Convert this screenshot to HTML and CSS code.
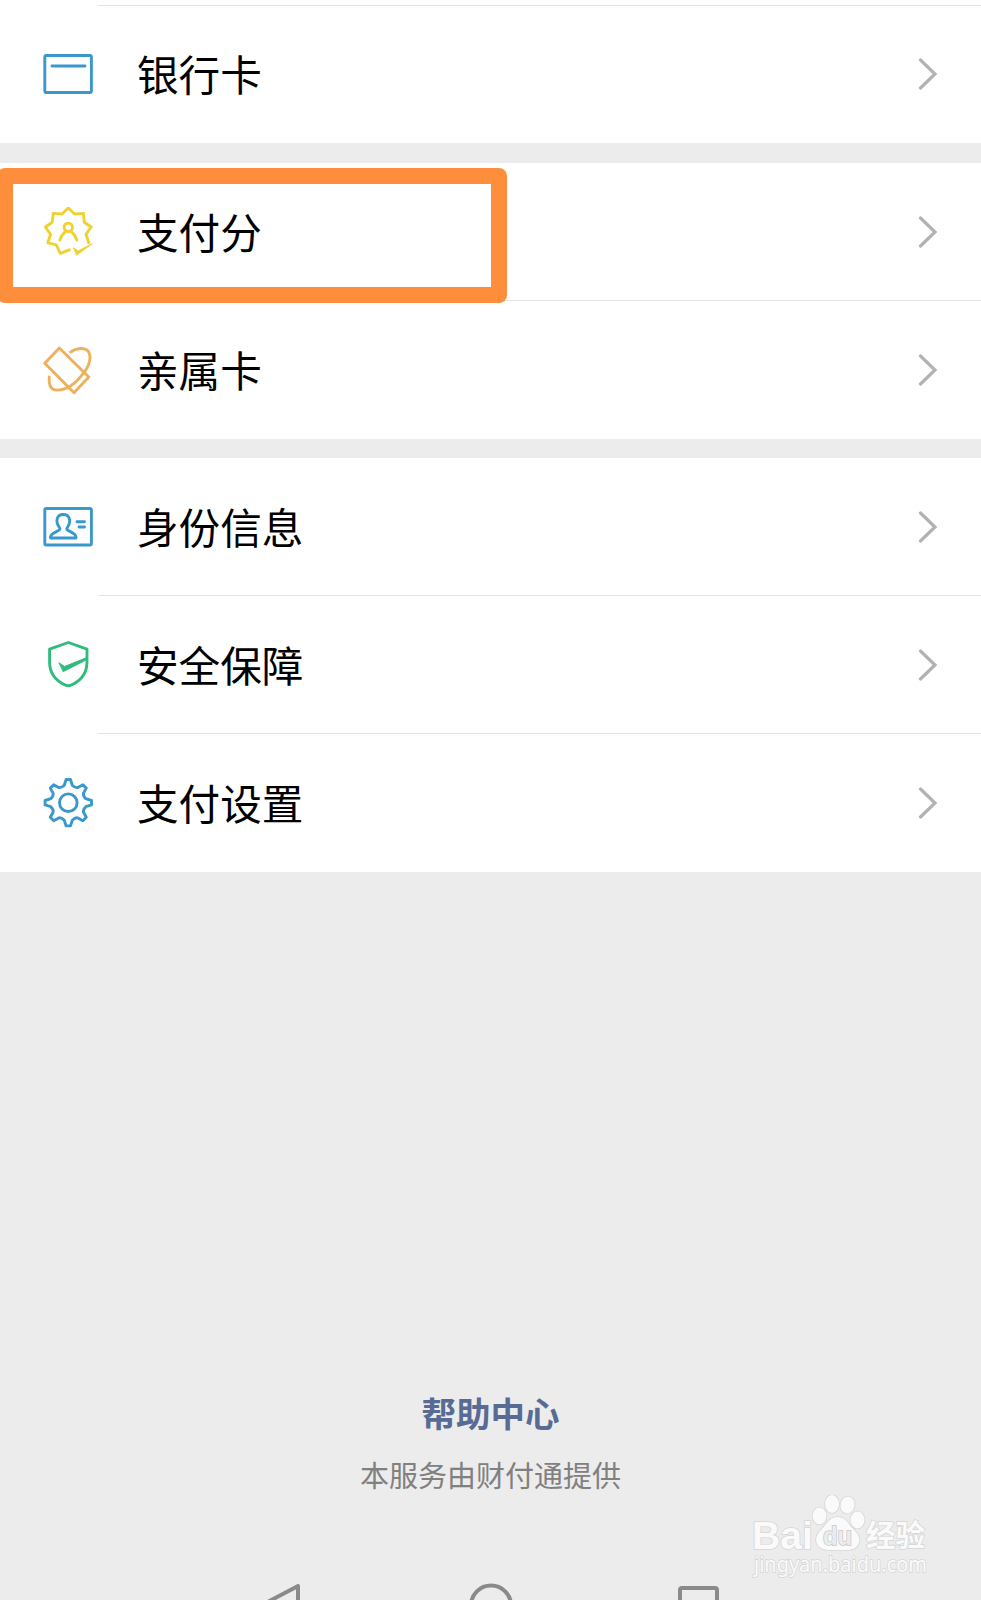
FILE: index.html
```html
<!DOCTYPE html>
<html lang="zh-CN">
<head>
    <meta charset="UTF-8">
    <meta name="viewport" content="width=device-width, initial-scale=1.0">
    <title>支付管理</title>
    <link rel="stylesheet" href="styles.css">
</head>
<body>
    <div class="page">
        <div class="group first">
            <div class="row">
                <svg class="icon blue" viewBox="0 0 50 50">
                    <rect x="1.8" y="6.5" width="46.6" height="37" rx="1.5"/>
                    <path d="M9 17H42"/>
                </svg>
                <span class="label">银行卡</span>
                <svg class="arrow" viewBox="0 0 20 32"><path d="M2.5 2L17 16L2.5 30"/></svg>
            </div>
        </div>

        <div class="group">
            <div class="row">
                <svg class="icon yellow" viewBox="0 0 50 50">
                    <g transform="translate(25.3 24)">
                        <path d="M20.4 11.8L17.7 3.3L22.9 -4L16 -8.8L15.1 -17.6L6.3 -17L0 -23L-6.3 -17L-15.1 -17.6L-16 -8.8L-22.9 -4L-17.7 3.3L-20.4 11.8L-12 13.8L-8 22.3L1 18.8"/>
                        <circle cx="0" cy="-3.7" r="4.2"/>
                        <path d="M-8.5 9C-7 4 -4.5 2 -2.5 0M8.5 9C7 4 4.5 2 2.5 0"/>
                        <path class="fill" d="M5.5 17L10 20L24 12.5L8.5 24Z"/>
                    </g>
                </svg>
                <span class="label">支付分</span>
                <svg class="arrow" viewBox="0 0 20 32"><path d="M2.5 2L17 16L2.5 30"/></svg>
                <div class="highlight"></div>
            </div>
            <div class="row">
                <svg class="icon orange" viewBox="0 0 50 50">
                    <path d="M16.3 3L1.8 18.2L31 47.7L45.8 32Z"/>
                    <path d="M6.3 32C5.5 39 7 44.500 13 45C24 46 34 37 39 30C47 21 49 11 45 6C41 2 33 3 27.7 7"/>
                </svg>
                <span class="label">亲属卡</span>
                <svg class="arrow" viewBox="0 0 20 32"><path d="M2.5 2L17 16L2.5 30"/></svg>
            </div>
        </div>

        <div class="group">
            <div class="row">
                <svg class="icon blue" viewBox="0 0 50 50">
                    <rect x="1.8" y="6.5" width="46.6" height="36.5" rx="1.5"/>
                    <path d="M17 26.5C11.5 19 14 12.5 20.3 12.5S29 19 23.8 26.5C23.5 30 33.5 29.5 33 36H7.5C7 29.500 17.5 30 17 26.5Z"/>
                    <path d="M34 19.7H41.500M36 25H41.500"/>
                </svg>
                <span class="label">身份信息</span>
                <svg class="arrow" viewBox="0 0 20 32"><path d="M2.5 2L17 16L2.5 30"/></svg>
            </div>
            <div class="row">
                <svg class="icon green" viewBox="0 0 50 50">
                    <path d="M44 17V9.2L25.3 2.500L6.600 9.200V22C6.600 34 14 41 21 44.500Q25.300 47 29.500 44.500C36.500 41 44 34 44 22V18"/>
                    <path class="fill" d="M16.300 23L21.500 26.500L44 17.500V19.500L20.500 31.500Z"/>
                </svg>
                <span class="label">安全保障</span>
                <svg class="arrow" viewBox="0 0 20 32"><path d="M2.5 2L17 16L2.5 30"/></svg>
            </div>
            <div class="row">
                <svg class="icon blue" viewBox="0 0 50 50">
                    <g transform="translate(25.300 24.700)">
                        <path d="M-2.2 -23.2H2.2L4 -17.5Q7 -14.5 9.6 -15.2L14.6 -18L18 -14.6L15.2 -9.6Q14.5 -7 17.5 -4L23.200 -2.200V2.200L17.500 4Q14.500 7 15.200 9.600L18 14.600L14.600 18L9.600 15.200Q7 14.500 4 17.500L2.200 23.200H-2.200L-4 17.500Q-7 14.500 -9.600 15.200L-14.600 18L-18 14.600L-15.200 9.600Q-14.500 7 -17.500 4L-23.200 2.200V-2.200L-17.500 -4Q-14.500 -7 -15.200 -9.600L-18 -14.600L-14.600 -18L-9.600 -15.200Q-7 -14.500 -4 -17.500Z"/>
                        <circle r="8.8"/>
                    </g>
                </svg>
                <span class="label">支付设置</span>
                <svg class="arrow" viewBox="0 0 20 32"><path d="M2.5 2L17 16L2.5 30"/></svg>
            </div>
        </div>

        <div class="footer">
            <a class="help">帮助中心</a>
            <p class="provider">本服务由财付通提供</p>
        </div>

        <div class="navbar">
            <svg class="back" viewBox="0 0 42 44"><path d="M40 3V42L3 22.500Z"/></svg>
            <svg class="home" viewBox="0 0 44 44"><circle cx="22" cy="22.500" r="20"/></svg>
            <svg class="recent" viewBox="0 0 41 44"><rect x="2" y="5" width="37" height="37" rx="2"/></svg>
        </div>

        <svg class="watermark" viewBox="0 0 190 96">
            <text class="logo" x="1" y="54" textLength="61" lengthAdjust="spacingAndGlyphs">Bai</text>
            <g class="paw">
                <ellipse cx="68.500" cy="21" rx="7" ry="8.500"/>
                <ellipse cx="81" cy="9" rx="7" ry="9"/>
                <ellipse cx="96.500" cy="10" rx="7" ry="8.500" transform="rotate(12 96.500 10)"/>
                <ellipse cx="106.500" cy="25" rx="7" ry="8.500"/>
                <path d="M87 22C95 22 97 29 103 35C113 44 108 55 96 55H78C66 55 61 45 69 36C76 29 78 22 87 22Z"/>
            </g>
            <text class="du" x="72" y="49.500" textLength="29" lengthAdjust="spacingAndGlyphs">du</text>
            <text class="cn" x="115" y="51" textLength="59" lengthAdjust="spacingAndGlyphs">经验</text>
            <text class="url" x="3" y="77" textLength="173" lengthAdjust="spacingAndGlyphs">jingyan.baidu.com</text>
        </svg>
    </div>
</body>
</html>
```

FILE: styles.css
```css
body, html {
    margin: 0;
    padding: 0;
    height: 100%;
    background: #ececec;
    font-family: "Noto Sans CJK SC", sans-serif;
}
.page {
    position: relative;
    display: flex;
    flex-direction: column;
    height: 1600px;
    overflow: hidden;
}
.group {
    background: white;
    margin-bottom: 19.5px;
}
.group.first {
    padding-top: 5px;
}
.row {
    position: relative;
    display: flex;
    align-items: center;
    height: 138px;
    padding: 0 43px;
}
/* hairline starts to the right of the icons */
.row + .row::before,
.first .row::before {
    content: "";
    position: absolute;
    top: -1px;
    left: 98px;
    right: 0;
    height: 1px;
    background: #e4e4e4;
}
.first .row::before {
    top: 0;
}
.icon {
    width: 50px;
    height: 50px;
    fill: none;
    stroke-width: 2.9;
    stroke-linecap: round;
    stroke-linejoin: round;
}
.blue {
    stroke: #3a98cc;
}
.yellow {
    stroke: #f0d22e;
}
.orange {
    stroke: #efb05c;
}
.green {
    stroke: #2fbc7c;
}
.fill {
    stroke-width: 1;
}
.yellow .fill {
    fill: #f0d22e;
}
.green .fill {
    fill: #2fbc7c;
}
.label {
    flex: 1;
    margin-left: 44px;
    padding-bottom: 2px;
    font-size: 41.6px;
    line-height: 60px;
    color: #000;
}
.arrow {
    width: 20px;
    height: 32px;
    fill: none;
    stroke: #b2b2b2;
    stroke-width: 3.2;
    stroke-linecap: round;
}
.highlight {
    position: absolute;
    top: 5.5px;
    left: -3px;
    width: 478px;
    height: 103px;
    border: 16px solid #ff8e3c;
    border-radius: 8px;
    z-index: 1;
}
.footer {
    margin-top: auto;
    padding-bottom: 88px;
    text-align: center;
}
.help {
    display: block;
    font-size: 34.5px;
    font-weight: bold;
    line-height: 50px;
    color: #576b95;
}
.provider {
    margin: 16px 0 0;
    font-size: 29px;
    line-height: 42px;
    color: #808080;
}
.navbar {
    display: flex;
    justify-content: space-between;
    align-items: flex-start;
    height: 17px;
    padding: 0 262px 0 258px;
}
.navbar svg {
    flex: none;
    height: 44px;
    fill: none;
    stroke: #8a8a8a;
    stroke-width: 4;
    stroke-linejoin: round;
}
.back {
    width: 42px;
}
.home {
    width: 44px;
    margin-left: 3px;
}
.recent {
    width: 41px;
}
.watermark {
    position: absolute;
    left: 751px;
    top: 1495px;
    width: 190px;
    height: 96px;
    fill: #fafafa;
    stroke: #d6d6d6;
    stroke-width: 1.6;
    paint-order: stroke;
}
.logo {
    font: bold 38px "Liberation Sans", sans-serif;
}
.du {
    font: bold 25px "Liberation Sans", sans-serif;
    fill: #ececec;
    stroke: #c8c8c8;
}
.cn {
    font: bold 30px "Noto Sans CJK SC", sans-serif;
}
.url {
    font: 22px "Noto Sans", sans-serif;
}
```
